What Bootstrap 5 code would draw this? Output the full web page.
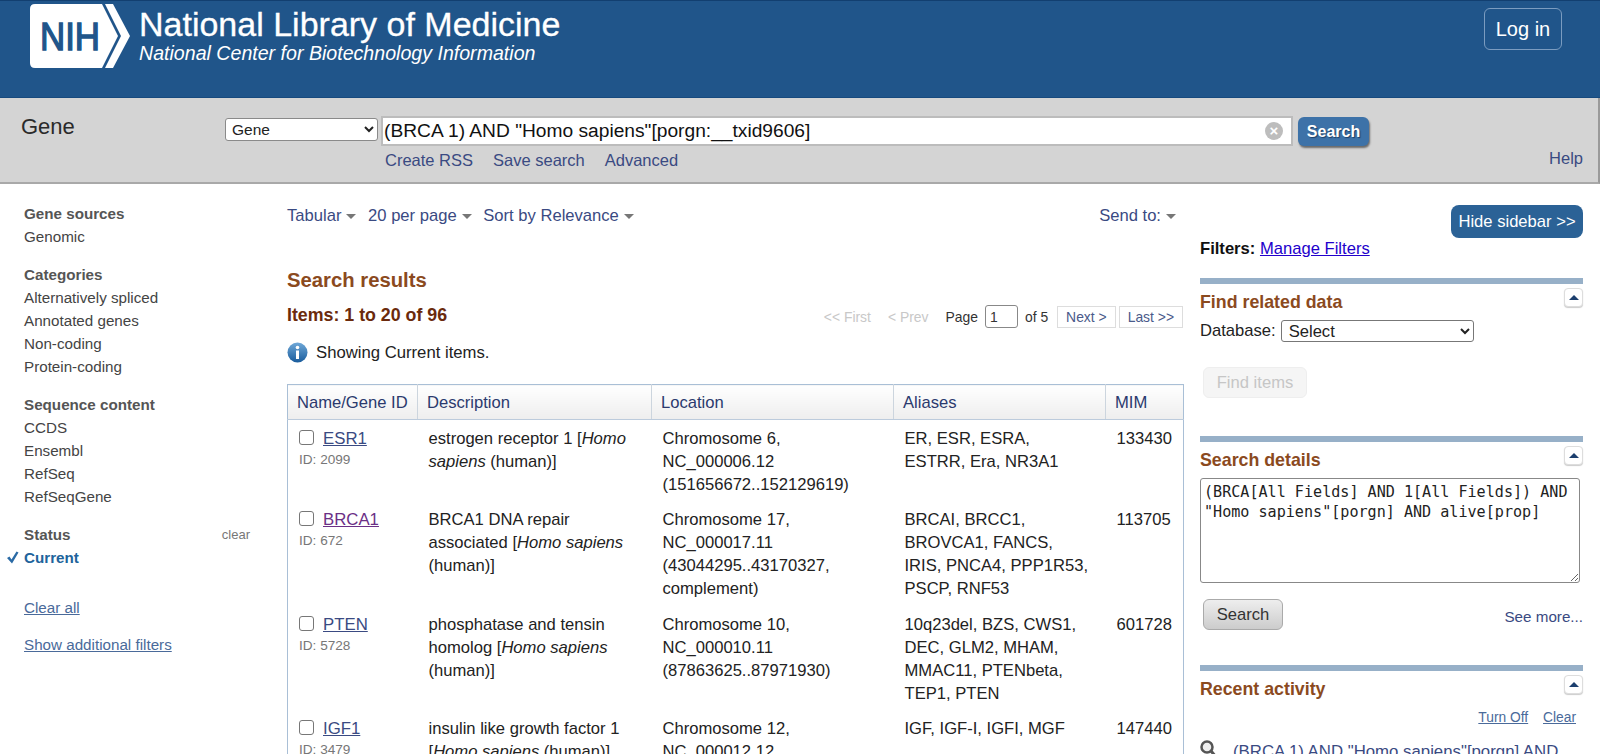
<!DOCTYPE html>
<html lang="en">
<head>
<meta charset="utf-8">
<title>Gene - NCBI</title>
<link href="https://cdn.jsdelivr.net/npm/bootstrap@5.3.0/dist/css/bootstrap.min.css" rel="stylesheet">
<style>
html,body{height:754px;overflow:hidden}
body{font-family:"Liberation Sans",Arial,sans-serif;font-size:16.6px;line-height:23px;color:#222;background:#fff}
a{color:#3a4a82;text-decoration:none}
.top-band{height:98px;background:#20558a;border-top:1px solid #123f70;border-bottom:1px solid #174a7e;padding:3px 38px 0 30px}
.brand-name{font-size:34px;line-height:38px;color:#fff;margin-top:1px;-webkit-text-stroke:.3px #fff}
.brand-sub{font-size:19.6px;line-height:24px;color:#fff;font-style:italic;margin-top:-2px}
.login-link{width:78px;height:42px;margin-top:4px;border:1px solid #7b9cc0;border-radius:6px;color:#fff;font-size:20px}
.search-band{height:86px;background:#d4d4d4;border-bottom:2px solid #a9a9a9;padding:18px 15px 0 21px;border-right:2px solid #9a9a9a}
.db-title{width:204px;font-size:22px;line-height:26px;color:#2a2a2a;margin-top:-2px}
.db-select{width:153px;height:23px;margin-top:2px;font-size:15.5px;padding:0 0 0 2px;border:1px solid #8a8a8a;border-radius:3px;background:#fff;color:#222;font-family:inherit}
.term-box{width:912px;height:30px;margin-left:3px;background:#fff;border:2px solid #bcbcbc;padding:0 8px 0 1px;font-size:19.2px;line-height:26px;color:#111}
.clear-x{width:18px;height:18px;background:#bdbdbd;border-radius:50%;color:#fff;font-size:15px;line-height:18px;text-align:center;font-weight:700}
.go-btn{width:71px;height:29px;margin:1px 0 0 5px;background:#3d72a8;border:0;border-radius:6px;color:#fff;font-weight:700;font-size:16px;padding:0;box-shadow:1px 2px 2px #6a6a6a;text-shadow:1px 1px 1px #1f3f66}
.sub-links{margin:2px 0 0 364px;font-size:16.5px;line-height:24px}
.sub-links a{margin-right:20px}
.help-link{margin-left:auto;margin-top:1px;font-size:16.5px}
.page-body{height:570px}
.left-rail{width:287px;flex:none;padding:18px 0 0 24px;position:relative;font-size:15.2px;line-height:23px;color:#444}
.rail-head{font-weight:700;color:#555}
.rail-group{margin-bottom:15px}
.rail-status{margin-bottom:27px}
.rail-row{width:226px}
.rail-clear{font-size:13px;color:#777}
.rail-current{font-weight:700;color:#20639b;position:relative}
.rail-check{position:absolute;left:-18px;top:5px}
.rail-link{color:#4a6a9a;text-decoration:underline;display:block}
.rail-link-gap{margin-bottom:14px}
.mid-col{width:896px;flex:none;padding-top:20px}
.tool-row{font-size:16.6px;line-height:24px}
.tool-row a{margin-right:7px}
.caret-mark{display:inline-block;width:0;height:0;border:5px solid transparent;border-top-color:#777;border-bottom:0;vertical-align:2px;margin-left:5px}
.results-title{font-size:20.3px;font-weight:700;color:#8b4a1e;line-height:24px;margin:40px 0 0}
.items-count{font-size:17.8px;font-weight:700;color:#6b2a0c;line-height:24px;margin-top:9px}
.pager{font-size:13.9px;line-height:20px;color:#333;margin-top:13px}
.pager .off{color:#c8c8c8;margin-right:17px}
.page-input{width:33px;height:23px;border:1px solid #888;border-radius:3px;font-size:13.9px;padding:0 4px;margin:0 7px;background:#fff;color:#333;font-family:inherit}
.pg-btn{border:1px solid #ddd;padding:0 8px;margin-left:3px;height:22px;line-height:20px;color:#4a5a8a}
.of-text{margin-right:6px}
.note-line{height:24px;margin-top:12px;font-size:16.7px}
table.res-table{width:896px;table-layout:fixed;margin:20px 0 0;border:1px solid #a9bfd6;border-bottom:0;font-size:16.6px;line-height:23px;--bs-table-bg:transparent;--bs-table-color:#222}
table.res-table th{height:35px;padding:0 9px;font-weight:400;color:#2b3a6e;font-size:16.6px;background:linear-gradient(#fff,#eee);border-bottom:1px solid #bccbdc;border-right:1px solid #ccd5de;vertical-align:middle}
table.res-table td{padding:6.5px 6px 6px 11px;border:0;vertical-align:top}
table.res-table td:first-child{padding:6.5px 0 6px 11px}
.gene-a{text-decoration:underline;color:#3a4a82;margin-left:9px;font-size:16.8px}
.gene-a.seen{color:#6b2f86}
.tick-box{display:inline-block;width:15px;height:15px;border:1px solid #777;border-radius:3px;background:#fff;vertical-align:-1px}
.gene-id{font-size:13.6px;line-height:20px;color:#777}
.right-col{width:383px;flex:none;margin-left:17px;padding-top:21px;position:relative}
.hide-btn{width:132px;height:33px;background:#2b6296;color:#fff;border:0;border-radius:8px;font-size:16.6px;padding:0;display:block;margin-left:auto}
.filters-line{font-size:16.6px;line-height:22px;color:#111;margin-bottom:18px}
.filters-line a{color:#2200cc;text-decoration:underline}
.side-block{border-top:6px solid #97b0c8;position:relative;padding-top:6px}
.side-title{font-size:17.8px;font-weight:700;color:#8b4a1e;line-height:24px}
.fold-btn{position:absolute;right:0;top:4px;width:19px;height:19px;border:1px solid #ddd;border-radius:4px;background:#fff;display:flex;align-items:center;justify-content:center;box-shadow:0 1px 1px #ccc}
.fold-btn i{display:block;width:0;height:0;border:5px solid transparent;border-bottom-color:#1c3f6e;border-top:0}
.db-line{font-size:16.6px;margin-top:5px;height:23px}
.small-select{width:193px;height:22px;border:1px solid #777;border-radius:3px;margin-left:5px;font-size:16.6px;padding:0 0 0 3px;background:#fff;color:#222;font-family:inherit}
.find-btn{width:104px;height:31px;margin:25px 0 0 3px;border:1px solid #eee;border-radius:6px;background:#f5f5f5;color:#c6c6c6;font-size:16.6px;padding:0;display:block}
.details-box{width:380px;height:105px;display:block;margin-top:6px;border:1px solid #888;border-radius:3px;padding:3px 3px;font-family:"DejaVu Sans Mono",monospace;font-size:15.1px;line-height:20px;color:#222;background:#fff;resize:both}
.grey-btn{width:80px;height:31px;margin-left:3px;border:1px solid #aaa;border-radius:6px;background:linear-gradient(#eee,#ccc);color:#333;font-size:16.6px;padding:0}
.see-more{font-size:15.2px;line-height:20px}
.recent-links{font-size:13.8px;text-align:right;padding-right:7px;line-height:20px;margin-top:7px}
.recent-links a{color:#4a6a9a;text-decoration:underline;margin-left:11px}
.recent-item{font-size:16.8px;line-height:23px;margin-top:12px;color:#3a4a82}
</style>
</head>
<body>
<header class="top-band d-flex justify-content-between">
  <div class="d-flex">
    <svg width="101" height="65" viewBox="0 0 101 65" role="img" aria-label="NIH">
      <path d="M5 0H72L88 32 72 64H5Q0 64 0 59V5Q0 0 5 0Z" fill="#fff"/>
      <path d="M75 0H83L100 32 83 64H75L91 32Z" fill="#fff"/>
      <text x="10" y="46" font-family="Liberation Sans" font-size="39" fill="#20558a" stroke="#20558a" stroke-width="1.4" textLength="60" lengthAdjust="spacingAndGlyphs">NIH</text>
    </svg>
    <div class="ms-2">
      <div class="brand-name">National Library of Medicine</div>
      <div class="brand-sub">National Center for Biotechnology Information</div>
    </div>
  </div>
  <a class="login-link d-flex align-items-center justify-content-center" href="#">Log in</a>
</header>
<section class="search-band">
  <div class="d-flex align-items-start">
    <div class="db-title">Gene</div>
    <select class="db-select"><option>Gene</option></select>
    <div class="term-box d-flex justify-content-between align-items-center">
      <span>(BRCA 1) AND "Homo sapiens"[porgn:__txid9606]</span><span class="clear-x">×</span>
    </div>
    <button class="go-btn" type="button">Search</button>
  </div>
  <div class="d-flex">
    <div class="sub-links"><a href="#">Create RSS</a><a href="#">Save search</a><a href="#">Advanced</a></div>
    <a class="help-link" href="#">Help</a>
  </div>
</section>
<main class="page-body d-flex">
  <nav class="left-rail">
    <div class="rail-group"><div class="rail-head">Gene sources</div><div>Genomic</div></div>
    <div class="rail-group"><div class="rail-head">Categories</div><div>Alternatively spliced</div><div>Annotated genes</div><div>Non-coding</div><div>Protein-coding</div></div>
    <div class="rail-group"><div class="rail-head">Sequence content</div><div>CCDS</div><div>Ensembl</div><div>RefSeq</div><div>RefSeqGene</div></div>
    <div class="rail-status">
      <div class="rail-row d-flex justify-content-between align-items-center"><span class="rail-head">Status</span><span class="rail-clear">clear</span></div>
      <div class="rail-current"><svg class="rail-check" width="13" height="13" viewBox="0 0 13 13"><path d="M1 7l2.5-1.5 2 3 5-8 2 1-6.5 11z" fill="#2a6aa5"/></svg>Current</div>
    </div>
    <a class="rail-link rail-link-gap" href="#">Clear all</a>
    <a class="rail-link" href="#">Show additional filters</a>
  </nav>
  <div class="mid-col">
    <div class="d-flex justify-content-between tool-row">
      <div><a href="#">Tabular<span class="caret-mark"></span></a> <a href="#">20 per page<span class="caret-mark"></span></a> <a href="#">Sort by Relevance<span class="caret-mark"></span></a></div>
      <a href="#">Send to:<span class="caret-mark"></span></a>
    </div>
    <h2 class="results-title">Search results</h2>
    <div class="d-flex justify-content-between align-items-center">
      <div class="items-count">Items: 1 to 20 of 96</div>
      <div class="pager d-flex align-items-center">
        <span class="off">&lt;&lt; First</span><span class="off">&lt; Prev</span><span>Page</span>
        <input class="page-input" value="1" aria-label="Page"><span class="of-text">of 5</span>
        <a class="pg-btn" href="#">Next &gt;</a><a class="pg-btn" href="#">Last &gt;&gt;</a>
      </div>
    </div>
    <div class="note-line d-flex align-items-center gap-2">
      <svg width="21" height="21" viewBox="0 0 21 21"><defs><linearGradient id="ig" x1="0" y1="0" x2="0" y2="1"><stop offset="0" stop-color="#6fa8d8"/><stop offset="1" stop-color="#1a5c9c"/></linearGradient></defs><circle cx="10.5" cy="10.5" r="10" fill="url(#ig)"/><circle cx="10.5" cy="5.5" r="1.8" fill="#fff"/><rect x="9" y="8.5" width="3" height="8.5" fill="#fff"/></svg>
      <span>Showing Current items.</span>
    </div>
    <table class="table res-table">
      <colgroup><col style="width:130px"><col style="width:234px"><col style="width:242px"><col style="width:212px"><col style="width:78px"></colgroup>
      <thead><tr><th>Name/Gene ID</th><th>Description</th><th>Location</th><th>Aliases</th><th style="border-right:0">MIM</th></tr></thead>
      <tbody>
        <tr><td><span class="tick-box"></span><a class="gene-a" href="#">ESR1</a><div class="gene-id">ID: 2099</div></td><td>estrogen receptor 1 [<i>Homo sapiens</i> (human)]</td><td>Chromosome 6,<br>NC_000006.12<br>(151656672..152129619)</td><td>ER, ESR, ESRA,<br>ESTRR, Era, NR3A1</td><td>133430</td></tr>
        <tr><td><span class="tick-box"></span><a class="gene-a seen" href="#">BRCA1</a><div class="gene-id">ID: 672</div></td><td>BRCA1 DNA repair associated [<i>Homo sapiens</i> (human)]</td><td>Chromosome 17,<br>NC_000017.11<br>(43044295..43170327,<br>complement)</td><td>BRCAI, BRCC1,<br>BROVCA1, FANCS,<br>IRIS, PNCA4, PPP1R53,<br>PSCP, RNF53</td><td>113705</td></tr>
        <tr><td><span class="tick-box"></span><a class="gene-a" href="#">PTEN</a><div class="gene-id">ID: 5728</div></td><td>phosphatase and tensin homolog [<i>Homo sapiens</i> (human)]</td><td>Chromosome 10,<br>NC_000010.11<br>(87863625..87971930)</td><td>10q23del, BZS, CWS1,<br>DEC, GLM2, MHAM,<br>MMAC11, PTENbeta,<br>TEP1, PTEN</td><td>601728</td></tr>
        <tr><td><span class="tick-box"></span><a class="gene-a" href="#">IGF1</a><div class="gene-id">ID: 3479</div></td><td>insulin like growth factor 1 [<i>Homo sapiens</i> (human)]</td><td>Chromosome 12,<br>NC_000012.12</td><td>IGF, IGF-I, IGFI, MGF</td><td>147440</td></tr>
      </tbody>
    </table>
  </div>
  <aside class="right-col">
    <button class="hide-btn" type="button">Hide sidebar &gt;&gt;</button>
    <div class="filters-line"><b>Filters:</b> <a href="#">Manage Filters</a></div>
    <section class="side-block" style="height:158px">
      <div class="side-title">Find related data</div><span class="fold-btn"><i></i></span>
      <div class="db-line d-flex align-items-center">Database:<select class="small-select"><option>Select</option></select></div>
      <button class="find-btn" disabled type="button">Find items</button>
    </section>
    <section class="side-block" style="height:229px">
      <div class="side-title">Search details</div><span class="fold-btn"><i></i></span>
      <textarea class="details-box" aria-label="Search details">(BRCA[All Fields] AND 1[All Fields]) AND "Homo sapiens"[porgn] AND alive[prop]</textarea>
      <div class="d-flex justify-content-between mt-3"><button class="grey-btn" type="button">Search</button><a class="see-more mt-2" href="#">See more...</a></div>
    </section>
    <section class="side-block">
      <div class="side-title">Recent activity</div><span class="fold-btn"><i></i></span>
      <div class="recent-links"><a href="#">Turn Off</a> <a href="#">Clear</a></div>
      <div class="recent-item d-flex gap-3">
        <svg width="17" height="20" viewBox="0 0 17 20"><circle cx="7" cy="7" r="5.5" fill="#eee" stroke="#555" stroke-width="2.5"/><path d="M11 11l5 6" stroke="#555" stroke-width="3"/></svg>
        <span>(BRCA 1) AND "Homo sapiens"[porgn] AND</span>
      </div>
    </section>
  </aside>
</main>
</body>
</html>
